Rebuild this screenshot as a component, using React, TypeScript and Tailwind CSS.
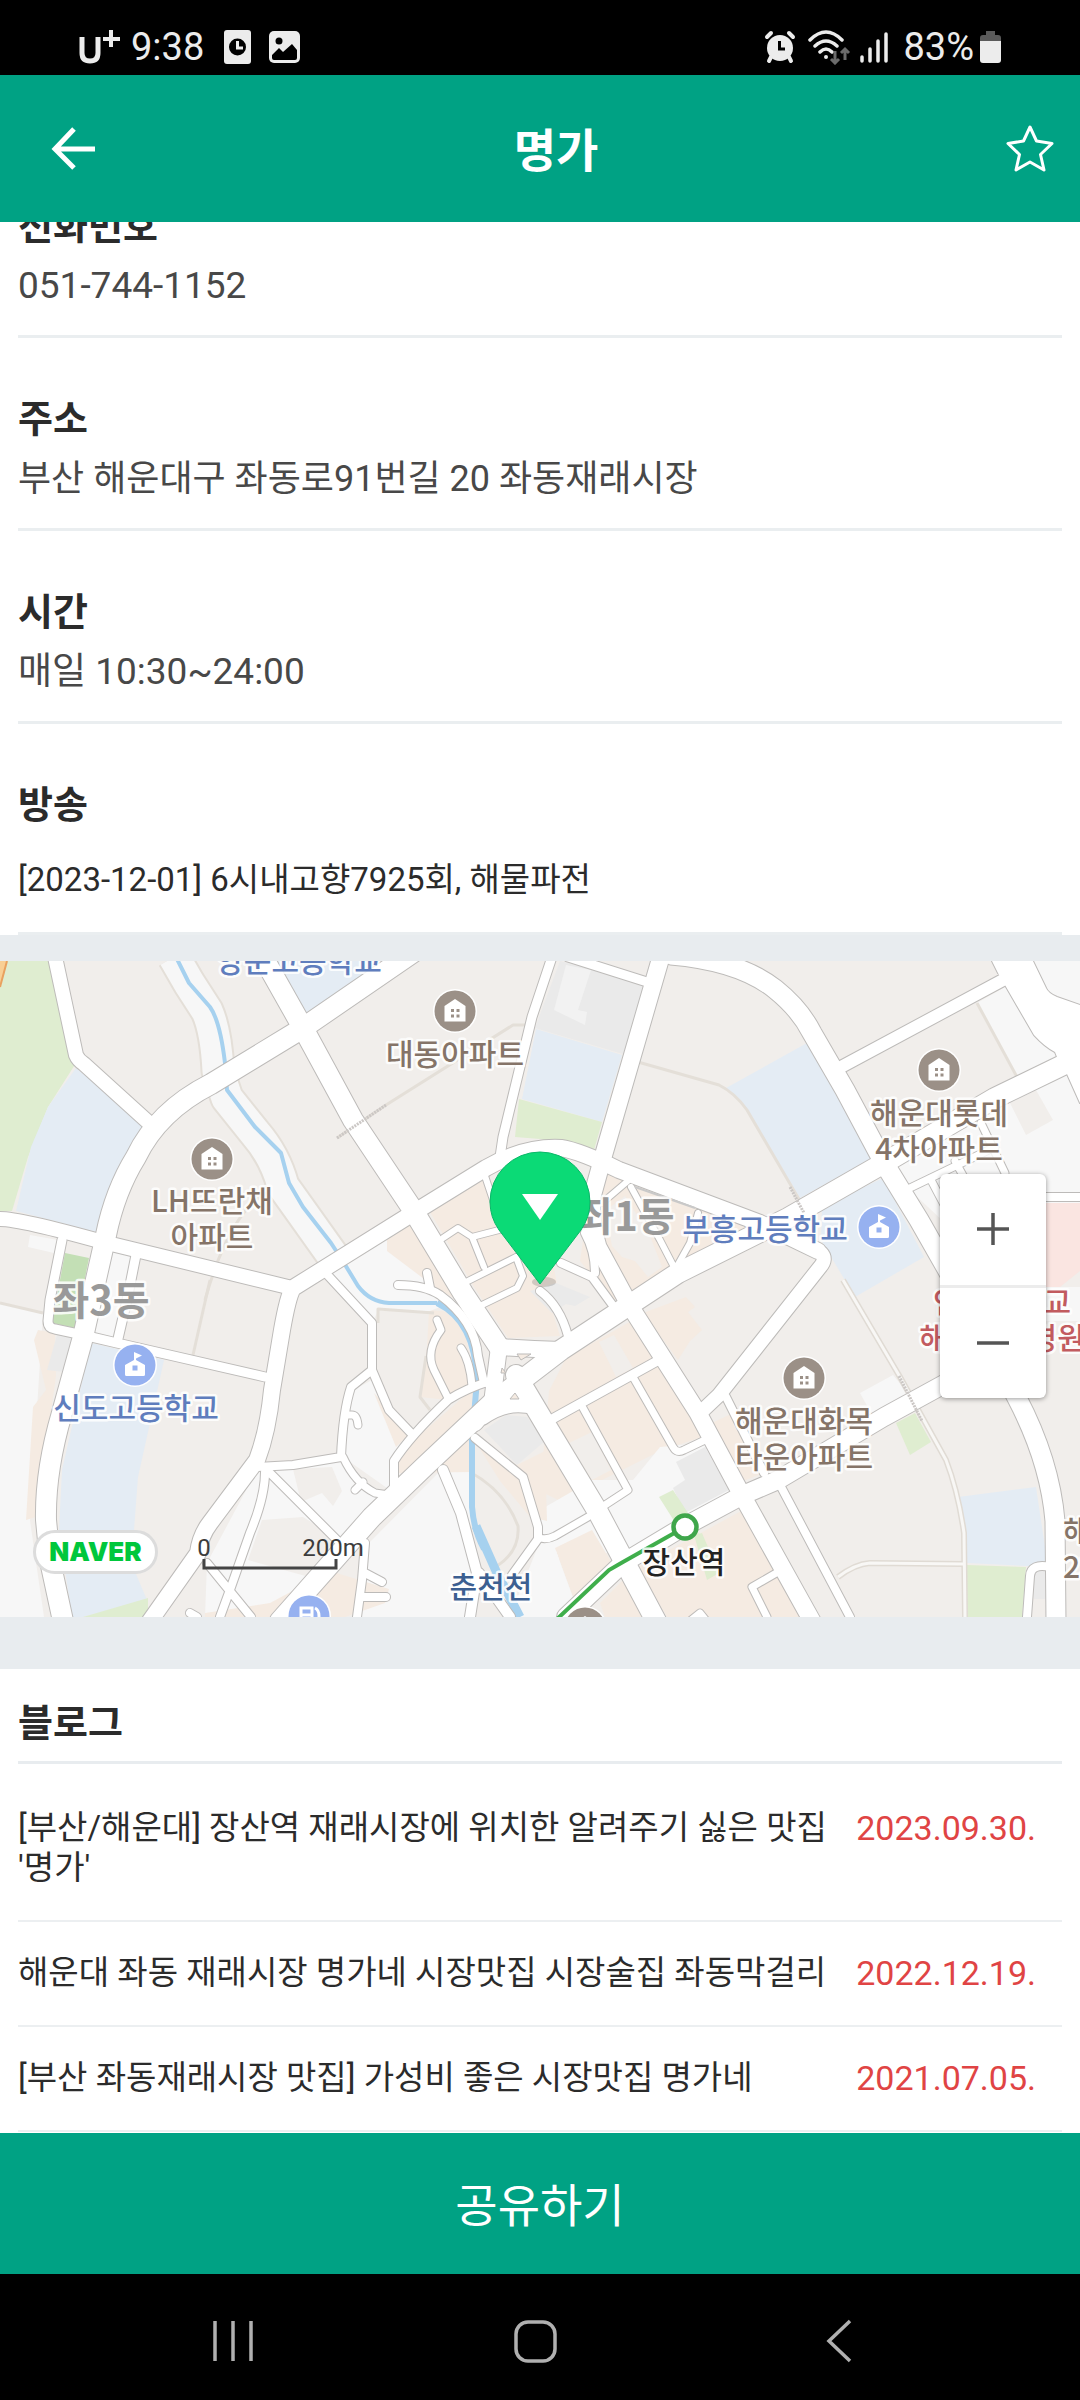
const sans = "font-['Roboto','Noto_Sans_CJK_KR',sans-serif]";

type Area = { fill: string; points: string };
type Road = { width: number; d: string };
type Label = { x: number; y: number; lines: string[]; color: string; size?: number; weight?: number; anchor?: 'start' | 'middle' };

const PLAIN = '#f7f7f7';
const BEIGE = '#f1eeeb';
const PEACH = '#f5ebe2';
const SCHOOL = '#e4ecf4';
const GREEN = '#dfedd0';
const GREY = '#eaeaea';

const areas: Area[] = [
  { fill: GREEN, points: '0,0 52,0 76,102 48,146 28,196 12,250 0,250' },
  { fill: '#f9cf94', points: '0,0 7,0 0,26' },
  { fill: SCHOOL, points: '76,107 148,166 120,220 96,271 16,250 31,186 48,146' },
  { fill: SCHOOL, points: '272,0 400,0 306,54' },
  { fill: PLAIN, points: '0,342 43,352 30,560 44,656 0,656' },
  { fill: PEACH, points: '38,369 55,372 56,415 36,556 26,559 33,446 46,429 34,379' },
  { fill: GREY, points: '57,374 72,376 65,411 47,409' },
  { fill: PLAIN, points: '30,274 58,279 54,292 28,286' },
  { fill: '#c3dfb5', points: '65,292 89,297 75,367 52,362' },
  { fill: PLAIN, points: '112,291 131,294 115,380 94,372' },
  { fill: SCHOOL, points: '91,382 164,399 138,516 134,569 133,606 147,639 83,656 72,656 59,569 62,509' },
  { fill: GREEN, points: '83,656 148,637 148,656' },
  { fill: PLAIN, points: '348,432 372,419 411,472 394,532 343,496' },
  { fill: PEACH, points: '374,432 411,472 396,486' },
  { fill: PLAIN, points: '257,509 341,499 386,539 303,626 248,656 205,656 207,602' },
  { fill: PLAIN, points: '441,509 470,511 472,656 358,656 369,582' },
  { fill: PEACH, points: '205,652 270,642 330,610 389,628 385,642 345,656 205,656' },
  { fill: BEIGE, points: '262,559 303,556 341,579 320,619 248,599' },
  { fill: BEIGE, points: '293,508 332,506 342,530 333,545 322,532 301,541' },
  { fill: PEACH, points: '399,512 399,492 475,426 472,511' },
  { fill: PEACH, points: '429,349 462,352 475,429 448,439 420,436 427,386' },
  { fill: PLAIN, points: '334,290 387,279 455,340 430,350 378,350 372,362 325,312' },
  { fill: PEACH, points: '387,279 413,262 460,340 440,330 387,290' },
  { fill: PEACH, points: '430,251 484,218 540,230 560,340 545,326 560,375 508,377 474,326' },
  { fill: PEACH, points: '600,206 626,216 747,266 636,332 612,339 580,300 590,230' },
  { fill: BEIGE, points: '625,235 650,275 662,306 648,316 635,300 622,296 612,285 605,250' },
  { fill: GREY, points: '560,0 647,23 623,93 535,67' },
  { fill: '#f2f2f2', points: '566,4 591,9 578,49 587,51 585,64 554,49' },
  { fill: SCHOOL, points: '536,68 622,94 602,161 522,138' },
  { fill: GREEN, points: '519,138 602,161 594,189 540,178 515,176' },
  { fill: SCHOOL, points: '807,82 872,197 800,237 747,149 726,127' },
  { fill: SCHOOL, points: '822,246 883,217 924,296 855,336 821,279' },
  { fill: PLAIN, points: '884,205 995,145 1080,100 1080,242 943,260' },
  { fill: PLAIN, points: '977,42 1005,26 1057,96 1017,116' },
  { fill: BEIGE, points: '1010,142 1036,129 1053,159 1026,174' },
  { fill: PLAIN, points: '1032,0 1080,0 1080,48 1046,32' },
  { fill: '#fae5e1', points: '1046,242 1080,242 1080,310 1060,326 1046,326' },
  { fill: PLAIN, points: '1046,326 1080,326 1080,360 1046,360' },
  { fill: GREY, points: '530,330 556,322 590,336 575,345 566,343 552,352' },
  { fill: PEACH, points: '643,352 686,336 695,346 688,351 702,369 690,380 678,399' },
  { fill: PEACH, points: '566,397 633,359 705,475 660,490 600,520 560,540 540,530 549,430' },
  { fill: BEIGE, points: '599,381 614,374 633,407 616,416' },
  { fill: BEIGE, points: '569,482 592,471 611,509 592,519' },
  { fill: PLAIN, points: '540,549 592,519 633,519 660,486 705,482 731,529 630,589 540,600' },
  { fill: GREY, points: '676,501 705,486 729,529 685,552 673,527 685,519' },
  { fill: GREEN, points: '659,536 673,529 688,552 719,612 707,619 688,582' },
  { fill: PEACH, points: '743,549 638,606 667,656 802,656' },
  { fill: GREEN, points: '694,574 702,572 719,612 707,619' },
  { fill: BEIGE, points: '753,540 777,528 845,656 812,656' },
  { fill: PEACH, points: '555,587 592,569 612,602 574,639' },
  { fill: PLAIN, points: '540,580 556,590 574,639 600,656 510,656' },
  { fill: PEACH, points: '600,642 623,619 643,656 605,656' },
  { fill: PEACH, points: '712,462 733,452 764,512 743,520' },
  { fill: GREEN, points: '896,462 915,452 931,481 910,494' },
  { fill: PLAIN, points: '860,432 893,414 908,432 871,452' },
  { fill: SCHOOL, points: '958,536 1036,526 1048,606 967,602' },
  { fill: GREEN, points: '967,604 1026,606 1022,656 967,656' },
  { fill: GREY, points: '1034,610 1048,610 1046,638 1034,638' },
  { fill: GREY, points: '484,469 506,454 527,456 545,480 517,504' },
  { fill: PEACH, points: '475,480 517,504 545,490 547,560 530,556 500,520' },
];

const footpaths: string[] = [
  'M530 64H513L386 144L337 177',
  'M638 101L719 124Q735 132 747 149L800 240',
  'M977 42L1017 116',
  'M210 319L193 394',
  'M268 231Q230 250 205 339',
  'M0 342L43 352',
  'M378 362V348L434 352M426 395L420 436L430 449',
  'M470 511Q505 530 518 565Q520 590 497 605',
];

const alleys: string[] = [
  'M843 319L900 416L946 499Q958 530 964 572L965 656',
  'M838 616Q855 603 870 602L964 603',
];

const roads: Road[] = [
  { width: 7, d: 'M583 447L628 529L602 546M633 416L673 486Q677 493 684 489L705 479M588 556L555 575Q547 579 540 577' },
  { width: 7, d: 'M778 611L752 626L767 656M690 660L700 652L708 662' },
  { width: 6, d: 'M484 212L494 242M443 277L458 267L472 276L499 269M472 276L484 306M468 320L516 296L523 315L517 327L482 344' },
  { width: 8, d: 'M540 330Q560 345 568 375M561 302L592 316L614 346M585 272Q595 290 595 312' },
  { width: 6, d: 'M631 226L660 279L674 306M698 252L690 282L676 307M629 219L602 242' },
  { width: 7, d: 'M910 227L995 186M981 162L1005 212M931 219L950 255M955 200L966 220' },
  { width: 8, d: 'M1046 236H1080M1050 606Q1031 602 1030 615L1027 656' },
  { width: 9, d: 'M62 279L50 339L48 360Q48 367 55 368L83 374L117 382L265 416M136 294L127 339L117 382' },
  { width: 8, d: 'M322 308L372 362V409L351 426Q343 450 341 496L293 504L257 506M372 409L389 449L411 472' },
  { width: 7, d: 'M345 454H352Q357 454 358 464M343 496Q355 522 375 532L389 534M363 521L355 529' },
  { width: 8, d: 'M394 532V500Q410 475 448 439Q465 428 490 420M270 512L338 580M265 511Q265 536 250 572L231 626L220 656M207 602L251 656' },
  { width: 8, d: 'M365 582L362 619L357 656M365 612L382 621M363 636H386M197 656L190 652' },
  { width: 8, d: 'M398 324Q425 324 440 334Q475 360 478 395L484 422M427 312L430 327' },
  { width: 7, d: 'M437 359L441 369Q425 390 434 409L448 437M461 387Q470 400 472 425' },
  { width: 8, d: 'M475 477L523 516L538 566V578L512 614' },
  { width: 10, d: 'M443 509L461 552L477 612L470 656M479 612L510 656' },
  { width: 9, d: 'M552 -4L532 56L503 176L500 196M568 -4L647 21M554 457L659 399' },
  { width: 8, d: 'M779 522L850 656M726 436L764 512' },
  { width: 12, d: 'M841 106L1003 19' },
  { width: 14, d: 'M55 -4L76 94Q78 99 84 103L148 161M0 258Q20 258 103 281L288 326M821 292Q827 298 820 306L719 434L700 452' },
  { width: 16, d: 'M418 249L293 327Q288 335 282 369L272 429Q268 470 257 499L210 562Q200 575 198 592L150 660M418 249L486 207Q525 185 561 187Q580 190 619 209L760 262L818 290' },
  { width: 17, d: 'M661 -4L603 196L592 236Q590 260 598 286L630 345L698 452L743 536L812 660' },
  { width: 20, d: 'M263 -4L303 67L353 159L413 249L463 332L499 386M516 414L547 466L598 551L656 660' },
  { width: 20, d: 'M418 -12L303 67L211 123Q158 150 136 196Q115 230 106 274L83 376L62 452Q45 510 46 559L50 600L63 660' },
  { width: 20, d: 'M1063 104L995 137L884 202L788 257L678 312L602 362L561 389L492 442L424 506L372 556L280 660' },
  { width: 19, d: 'M671 -6Q740 0 775 28Q800 48 812 72L845 129L884 202L919 259L985 375L1017 437Q1050 500 1055 560L1056 660' },
  { width: 18, d: 'M990 398L884 456L778 519L743 534L678 569L623 602L566 656' },
  { width: 16, d: 'M499 386L492 442L475 462M499 386Q530 388 561 389M482 456Q505 440 527 444' },
];

const labels: Label[] = [
  { x: 299, y: 11, lines: ['양운고등학교'], color: '#5f7dbd' },
  { x: 455, y: 104, lines: ['대동아파트'], color: '#857468' },
  { x: 212, y: 251, lines: ['LH뜨란채', '아파트'], color: '#857468' },
  { x: 939, y: 163, lines: ['해운대롯데', '4차아파트'], color: '#857468' },
  { x: 765, y: 279, lines: ['부흥고등학교'], color: '#5f7dbd' },
  { x: 101, y: 354, lines: ['좌3동'], color: '#999999', size: 40, weight: 700 },
  { x: 626, y: 270, lines: ['좌1동'], color: '#999999', size: 40, weight: 700 },
  { x: 136, y: 458, lines: ['신도고등학교'], color: '#5f7dbd' },
  { x: 804, y: 471, lines: ['해운대화목', '타운아파트'], color: '#857468' },
  { x: 1002, y: 352, lines: ['인제대학교', '해운대백병원'], color: '#c25b5f' },
  { x: 684, y: 612, lines: ['장산역'], color: '#222222' },
  { x: 491, y: 637, lines: ['춘천천'], color: '#3c5f91' },
  { x: 1063, y: 581, lines: ['해운대', '2차아파트'], color: '#857468', anchor: 'start' },
];

function HouseMarker({ x, y }: { x: number; y: number }) {
  return (
    <g transform={`translate(${x} ${y})`}>
      <circle r="22" fill="#fff" />
      <circle r="20.500" fill="#9b9087" />
      <path d="M0 -12L10.500 -5V10.500H-10.500V-5Z" fill="#fff" />
      <path d="M-4 -2h3v3h-3zM1.500 -2h3v3h-3zM-4 3.500h3v3h-3zM1.500 3.500h3v3h-3z" fill="#9b9087" />
    </g>
  );
}

function SchoolMarker({ x, y }: { x: number; y: number }) {
  return (
    <g transform={`translate(${x} ${y})`}>
      <circle r="22" fill="#fff" />
      <circle r="20.500" fill="#96b1f0" />
      <path d="M-1 -13L7 -9.500L1 -6.500V-5L10 0V9.500Q10 11 8.500 11H-8.500Q-10 11 -10 9.500V0L-1 -5Z" fill="#fff" />
      <rect x="-2.500" y="0.500" width="5" height="5" fill="#96b1f0" />
    </g>
  );
}

function MapCanvas() {
  return (
    <svg viewBox="0 0 1080 656" className="block h-auto w-full" role="img" aria-label="명가 위치 지도">
      <rect width="1080" height="656" fill={BEIGE} />
      {areas.map((a) => (
        <polygon key={a.points} points={a.points} fill={a.fill} />
      ))}
      <path d="M7 0L0 26" stroke="#e9a15f" strokeWidth="2" />
      <g fill="none" strokeLinejoin="round">
        {footpaths.map((d) => (
          <path key={d} d={d} stroke="#e4dfd8" strokeWidth="3" />
        ))}
        <path d="M174 -4L189 22L207 50Q216 70 218 110L227 137L255 172Q275 195 283 225L303 253L340 305" stroke="#e4dfd8" strokeWidth="35" />
        <path d="M174 -4L189 22L207 50Q216 70 218 110L227 137L255 172Q275 195 283 225L303 253L340 305" stroke="#f7f7f7" strokeWidth="31" />
        <path d="M176 -4L189 22L210 46Q220 60 225 102L227 129L255 166L281 192L289 222L303 246L331 282L344 302L358 325Q370 341 389 342L437 342" stroke="#a6d1ef" strokeWidth="4" />
        <path d="M437 342Q475 360 477 419L472 479V546Q474 570 484 588" stroke="#a6d1ef" strokeWidth="6" />
        <path d="M476 565L496 610L520 656" stroke="#a6d1ef" strokeWidth="9" />
        {alleys.map((d) => (
          <path key={d} d={d} stroke="#e0dbd4" strokeWidth="6" />
        ))}
        {alleys.map((d) => (
          <path key={d} d={d} stroke="#f8f7f5" strokeWidth="3" />
        ))}
      </g>
      <g fill="none" stroke="#bdbbb9" strokeLinecap="round" strokeLinejoin="round">
        {roads.map((r) => (
          <path key={r.d} d={r.d} strokeWidth={r.width + 2} />
        ))}
        <path d="M991 -2L998 12M1005 24L1034 74Q1045 86 1055 91L1057 96M1067 113L1080 142M1032 -2L1046 27Q1048 32 1057 36L1080 44" strokeWidth="2" />
      </g>
      <g fill="none" stroke="#ffffff" strokeLinecap="round" strokeLinejoin="round">
        {roads.map((r) => (
          <path key={r.d} d={r.d} strokeWidth={r.width} />
        ))}
      </g>
      <path d="M991 -2L998 12L1005 24L1034 74Q1045 86 1055 91L1057 96L1067 113L1080 142V44L1057 36Q1048 32 1046 27L1032 -2Z" fill="#fff" />
      <g fill="#f5ebe2" stroke="#bdbbb9">
        <path d="M502 407l4 5h-5zM517 393l14 0l-10 6zM510 438l5-6l4 6z" />
      </g>
      <path d="M337 177L386 144" stroke="#cbc7c5" strokeWidth="3" strokeDasharray="2 1" />
      <path d="M790 226L804 252M899 415L922 460" stroke="#cbc7c5" strokeWidth="3" strokeDasharray="2 1" />
      <path d="M635 226L695 247" stroke="#c9c9c9" strokeWidth="2" />
      <path d="M555 660L609 609L623 601L685 566" fill="none" stroke="#3fae4b" strokeWidth="4" />
      <circle cx="685" cy="566" r="11.500" fill="#fff" stroke="#3fa64b" strokeWidth="4.500" />

      <HouseMarker x={455} y={50} />
      <HouseMarker x={212} y={198} />
      <HouseMarker x={939} y={109} />
      <HouseMarker x={804} y={417} />
      <HouseMarker x={585} y={667} />
      <SchoolMarker x={135} y={404} />
      <SchoolMarker x={879} y={266} />
      <g transform="translate(309 655)">
        <circle r="22" fill="#fff" />
        <circle r="20.500" fill="#96b1f0" />
        <path d="M-8 6V-8H3V6M-8 -1H3M6 -8Q10 -6 10 0V6" fill="none" stroke="#fff" strokeWidth="3" />
      </g>

      <g className="font-['Noto_Sans_CJK_KR',sans-serif]" stroke="#ffffff" strokeWidth="5" strokeLinejoin="round" strokeOpacity="0.85" style={{ paintOrder: 'stroke' }}>
        {labels.map((l) => (
          <text key={l.lines[0] + l.x} x={l.x} y={l.y} fill={l.color} fontSize={l.size ?? 30} fontWeight={l.weight ?? 500} textAnchor={l.anchor ?? 'middle'}>
            {l.lines.map((line, i) => (
              <tspan key={line} x={l.x} dy={i * 36}>
                {line}
              </tspan>
            ))}
          </text>
        ))}
      </g>

      <ellipse cx="544" cy="321" rx="12" ry="5" fill="#000" opacity="0.150" />
      <path d="M540 323L499 269Q490 256 490 241A50 50 0 0 1 590 241Q590 256 581 269Z" fill="#0bda76" stroke="#09b868" strokeWidth="1" />
      <path d="M522 233H558L540 259Z" fill="#fff" />

      <g className="font-['Roboto',sans-serif]" fill="#3c3c3c" fontSize="24" textAnchor="middle">
        <text x="204" y="595">0</text>
        <text x="333" y="595">200m</text>
      </g>
      <path d="M204 598V607H336V598" fill="none" stroke="#444" strokeWidth="3" />
    </svg>
  );
}

function StatusBar() {
  return (
    <div className="flex h-[75px] shrink-0 items-center justify-between bg-black pt-[18px] pr-[78px] pl-[79px] text-[38px] leading-none text-[#ececec]">
      <div className="flex items-center">
        <svg width="42" height="36" viewBox="0 0 42 36" fill="none" stroke="#ececec" aria-label="U+">
          <path d="M3 8V24Q3 32 11 32T19 24V8" strokeWidth="5" />
          <path d="M32 1V18M24 10H41" strokeWidth="4" />
        </svg>
        <span className="ml-[10px]">9:38</span>
        <svg className="ml-5" width="28" height="36" viewBox="0 0 28 36">
          <rect x="0" y="1" width="27" height="34" rx="3" fill="#ececec" />
          <circle cx="13.500" cy="18" r="8.500" fill="#000" />
          <path d="M13.500 12V19H19" fill="none" stroke="#ececec" strokeWidth="3" />
        </svg>
        <svg className="ml-[17px]" width="32" height="36" viewBox="0 0 32 36">
          <rect x="0" y="2" width="31" height="32" rx="5" fill="#ececec" />
          <circle cx="10" cy="12" r="3.500" fill="#000" />
          <path d="M3 26L10 19L14 23L23 15L28 21V29Q28 31 26 31H5Q3 31 3 29Z" fill="#000" />
        </svg>
      </div>
      <div className="flex items-center">
        <svg width="32" height="36" viewBox="0 0 32 36" stroke="#ececec" strokeLinecap="round">
          <path d="M3 8L7 4M29 8L25 4M7 28L5 32M25 28L27 32" strokeWidth="4" />
          <circle cx="16" cy="19" r="13" fill="#ececec" stroke="none" />
          <path d="M15.500 12V20H21" fill="none" stroke="#000" strokeWidth="3" strokeLinecap="butt" />
        </svg>
        <svg className="ml-3" width="43" height="36" viewBox="0 0 43 36" fill="none" stroke="#ececec" strokeWidth="3.500" strokeLinecap="round">
          <path d="M2 11Q18 -5 34 11M7 17Q18 7 29 17M12 23Q18 17 24 23" />
          <circle cx="18" cy="28" r="1" strokeWidth="2" />
          <path d="M27 22V33M23 30L27 34L31 30M37 31V20M33 24L37 20L41 24" stroke="#6b6b6b" strokeWidth="3" strokeLinecap="butt" />
        </svg>
        <svg className="ml-2" width="29" height="36" viewBox="0 0 29 36" stroke="#ececec" strokeWidth="3.500" strokeLinecap="round">
          <path d="M3 28V32M11 20V32M19 12V32M27 5V32" />
        </svg>
        <span className="ml-[15px]">83%</span>
        <svg className="ml-[6px]" width="22" height="36" viewBox="0 0 22 36">
          <path d="M6 2H15V6H18Q21 6 21 9V12H0V9Q0 6 3 6H6Z" fill="#5a5a5a" />
          <path d="M0 12H21V31Q21 34 18 34H3Q0 34 0 31Z" fill="#ececec" />
        </svg>
      </div>
    </div>
  );
}

function InfoRow({ title, children }: { title: string; children: React.ReactNode }) {
  return (
    <section className="mx-[18px] border-b-[3px] border-[#eaeef0] pt-[57px] pb-[25px] text-[#484848]">
      <h2 className="text-[38px] leading-[48px] font-bold text-[#2b2b2b]">{title}</h2>
      <div className="mt-3 leading-[48px]">{children}</div>
    </section>
  );
}

const posts = [
  { title: "[부산/해운대] 장산역 재래시장에 위치한 알려주기 싫은 맛집 '명가'", date: '2023.09.30.' },
  { title: '해운대 좌동 재래시장 명가네 시장맛집 시장술집 좌동막걸리', date: '2022.12.19.' },
  { title: '[부산 좌동재래시장 맛집] 가성비 좋은 시장맛집 명가네', date: '2021.07.05.' },
];

export default function App() {
  return (
    <div className={`flex min-h-screen flex-col bg-white ${sans}`}>
      <StatusBar />
      <header className="relative z-10 grid h-[147px] shrink-0 grid-cols-[1fr_auto_1fr] items-center bg-[#00a284] text-white">
        <button type="button" aria-label="뒤로" className="ml-[50px] justify-self-start">
          <svg width="48" height="48" viewBox="0 0 48 48" fill="none" stroke="#fff" strokeWidth="5">
            <path d="M45 24H7M24 4L5 24L24 43" />
          </svg>
        </button>
        <h1 className="pt-1 pl-8 text-[46px] leading-[60px] font-bold">명가</h1>
        <button type="button" aria-label="즐겨찾기" className="mr-[25px] justify-self-end">
          <svg width="50" height="50" viewBox="0 0 50 50" fill="none" stroke="#fff" strokeWidth="3" strokeLinejoin="round">
            <path d="M25 3L31.500 17L47 19.500L35.500 30.500L39 46L25 38L11 46L14.500 30.500L3 19.500L18.500 17Z" />
          </svg>
        </button>
      </header>

      <main className="grow overflow-hidden">
        <div className="-mt-[77px]">
          <InfoRow title="전화번호">
            <a href="tel:051-744-1152" className="block text-[37px]">051-744-1152</a>
          </InfoRow>
          <InfoRow title="주소">
            <p className="text-[36px]">부산 해운대구 좌동로91번길 20 좌동재래시장</p>
          </InfoRow>
          <InfoRow title="시간">
            <p className="text-[37px]">매일 10:30~24:00</p>
          </InfoRow>
        </div>
        <section className="mx-[18px] border-b-[3px] border-[#eaeef0] pt-[57px] pb-[30px]">
          <h2 className="text-[38px] leading-[48px] font-bold text-[#2b2b2b]">방송</h2>
          <ul className="mt-[29px] text-[33px] leading-[44px] text-[#2b2b2b]">
            <li>[2023-12-01] 6시내고향7925회, 해물파전</li>
          </ul>
        </section>

        <section className="relative border-t-[26px] border-b-[52px] border-[#e8ecef]">
          <MapCanvas />
          <div className="absolute bottom-[43px] left-[33px] flex h-11 w-[125px] items-center justify-center rounded-full border-[3px] border-[#dcdcdc] bg-white font-['Inter',sans-serif] text-[26px] leading-none font-black text-[#00c73c]">
            NAVER
          </div>
          <div className="absolute top-[213px] right-[34px] flex h-56 w-[106px] flex-col divide-y-[3px] divide-[#ececec] rounded-md bg-white shadow-[0_1px_5px_rgba(0,0,0,0.4)]">
            <button type="button" aria-label="확대" className="flex flex-1 items-center justify-center">
              <svg width="32" height="32" viewBox="0 0 32 32" stroke="#555" strokeWidth="3.500">
                <path d="M0 16H32M16 0V32" />
              </svg>
            </button>
            <button type="button" aria-label="축소" className="flex flex-1 items-center justify-center">
              <svg width="32" height="32" viewBox="0 0 32 32" stroke="#555" strokeWidth="3.500">
                <path d="M0 16H32" />
              </svg>
            </button>
          </div>
        </section>

        <section className="mx-[18px]">
          <h2 className="border-b-[3px] border-[#e8ecef] pt-[30px] pb-[14px] text-[38px] leading-[48px] font-bold text-[#2b2b2b]">블로그</h2>
          <ul className="pt-[13px]">
            {posts.map((post) => (
              <li key={post.date} className="border-b-2 border-[#eceff1]">
                <a href="#" className="flex justify-between gap-4 pt-[31px] pr-[26px] pb-8 text-[33px] leading-[40px]">
                  <span className="min-w-0 flex-1 break-keep text-[#2b2b2b]">{post.title}</span>
                  <time className="text-[34px] text-[#e04444]">{post.date}</time>
                </a>
              </li>
            ))}
          </ul>
        </section>
      </main>

      <button type="button" className="h-[141px] w-full shrink-0 bg-[#00a284] pt-1 text-[46px] leading-[60px] text-white">
        공유하기
      </button>
      <nav className="flex h-[126px] shrink-0 items-center justify-between bg-black px-[20%] pt-2">
        <button type="button" aria-label="최근 앱" className="-ml-2">
          <svg width="48" height="48" viewBox="0 0 48 48" stroke="#b0b0b0" strokeWidth="3.500">
            <path d="M7 4V44M25 4V44M43 4V44" />
          </svg>
        </button>
        <button type="button" aria-label="홈">
          <svg width="48" height="48" viewBox="0 0 48 48" fill="none" stroke="#b0b0b0" strokeWidth="3.500">
            <rect x="4" y="5" width="39" height="39" rx="12" />
          </svg>
        </button>
        <button type="button" aria-label="이전">
          <svg width="48" height="48" viewBox="0 0 48 48" fill="none" stroke="#b0b0b0" strokeWidth="3.500">
            <path d="M34 4L13 24L34 44" />
          </svg>
        </button>
      </nav>
    </div>
  );
}
